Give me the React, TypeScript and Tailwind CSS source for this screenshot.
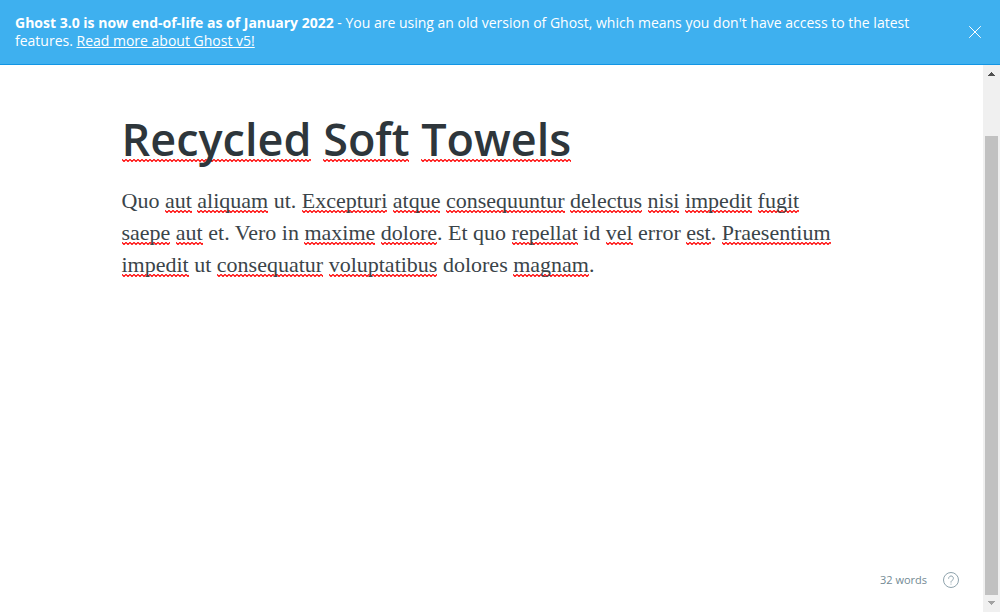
import type { ReactNode } from "react";

function Misspelt({ children, heading = false }: { children: ReactNode; heading?: boolean }) {
  return (
    <span
      className={`bg-[url('data:image/svg+xml,%3Csvg%20xmlns=%22http://www.w3.org/2000/svg%22%20width=%224%22%20height=%223%22%3E%3Cpath%20d=%22M-1%20-.5L2%202.5L5%20-.5%22%20fill=%22none%22%20stroke=%22red%22%20stroke-width=%221.2%22/%3E%3C/svg%3E')] bg-size-[4px_3px] bg-repeat-x ${
        heading ? "bg-[position:0_calc(100%-7px)]" : "bg-bottom-left"
      }`}
    >
      {children}
    </span>
  );
}

const body =
  "Quo *aut *aliquam ut. *Excepturi *atque *consequuntur *delectus *nisi *impedit *fugit *saepe *aut et. Vero in *maxime *dolore. Et quo *repellat id *vel error *est. *Praesentium *impedit ut *consequatur *voluptatibus dolores *magnam.";

function Marked({ text, heading }: { text: string; heading?: boolean }) {
  return text.split(" ").map((word, i) => {
    const lead = i ? " " : "";
    if (!word.startsWith("*")) return lead + word;
    const dot = word.endsWith(".");
    return (
      <span key={i}>
        {lead}
        <Misspelt heading={heading}>{word.slice(1, dot ? -1 : undefined)}</Misspelt>
        {dot && "."}
      </span>
    );
  });
}

function Scrollbar() {
  return (
    <div aria-hidden="true" className="flex w-[17px] shrink-0 flex-col items-center bg-[#f0f0f0]">
      <svg width="17" height="17" viewBox="0 0 17 17" className="shrink-0" fill="#505050" shapeRendering="crispEdges">
        <path d="M8 7h1v1h1v1h1v1h1v1H5v-1h1V9h1V8h1z" />
      </svg>
      <div className="mt-[54px] w-[13px] grow bg-[#c1c1c1]" />
      <svg width="17" height="17" viewBox="0 0 17 17" className="shrink-0" fill="#a3a3a3" shapeRendering="crispEdges">
        <path d="M5 6h7v1h-1v1h-1v1H9v1H8V9H7V8H6V7H5z" />
      </svg>
    </div>
  );
}

export default function App() {
  return (
    <div className="flex h-screen flex-col bg-white font-['Open_Sans','Noto_Sans',sans-serif]">
      <aside className="flex items-center justify-between border-b border-[#1295e4] bg-[#3eb0ef] py-[14px] pr-[18px] pl-[15px] text-sm leading-[18px] text-white">
        <p className="max-w-[900px]">
          <strong className="font-bold">Ghost 3.0 is now end-of-life as of January 2022</strong> - You are using an old
          version of Ghost, which means you don't have access to the latest features.{" "}
          <a href="#v5" className="underline">
            Read more about Ghost v5!
          </a>
        </p>
        <button type="button" aria-label="Close" className="shrink-0">
          <svg width="14" height="14" viewBox="0 0 14 14" fill="none" stroke="#fff" strokeLinecap="round">
            <path d="M1.5 1.5l11 11M12.5 1.5l-11 11" />
          </svg>
        </button>
      </aside>

      <div className="flex min-h-0 grow">
        <div className="flex grow flex-col">
          <main className="mx-auto w-full max-w-[740px] grow pt-11">
            <h1
              contentEditable
              suppressContentEditableWarning
              spellCheck={false}
              className="text-[45px] leading-[60px] font-semibold text-[#2e363b] outline-none"
            >
              <Marked text="*Recycled *Soft *Towels" heading />
            </h1>
            <p
              contentEditable
              suppressContentEditableWarning
              spellCheck={false}
              className="mt-4 pr-4 font-['Georgia','Liberation_Serif',serif] text-[22px] leading-[32px] text-[#3a4449] outline-none"
            >
              <Marked text={body} />
            </p>
          </main>
          <footer className="flex items-center justify-end gap-4 pr-6 pb-6 text-[11px] leading-4 text-[#738a94]">
            <span>32 words</span>
            <a href="#help" aria-label="Help">
              <svg width="16" height="16" viewBox="0 0 16 16" fill="none" stroke="#8fa3ad">
                <circle cx="8" cy="8" r="7.5" />
                <path d="M5.6 6.3a2.4 2.4 0 1 1 3.6 2.1c-.8.45-1.2.8-1.2 1.8" strokeLinecap="round" />
                <circle cx="8" cy="12" r=".6" fill="#8fa3ad" stroke="none" />
              </svg>
            </a>
          </footer>
        </div>
        <Scrollbar />
      </div>
    </div>
  );
}
